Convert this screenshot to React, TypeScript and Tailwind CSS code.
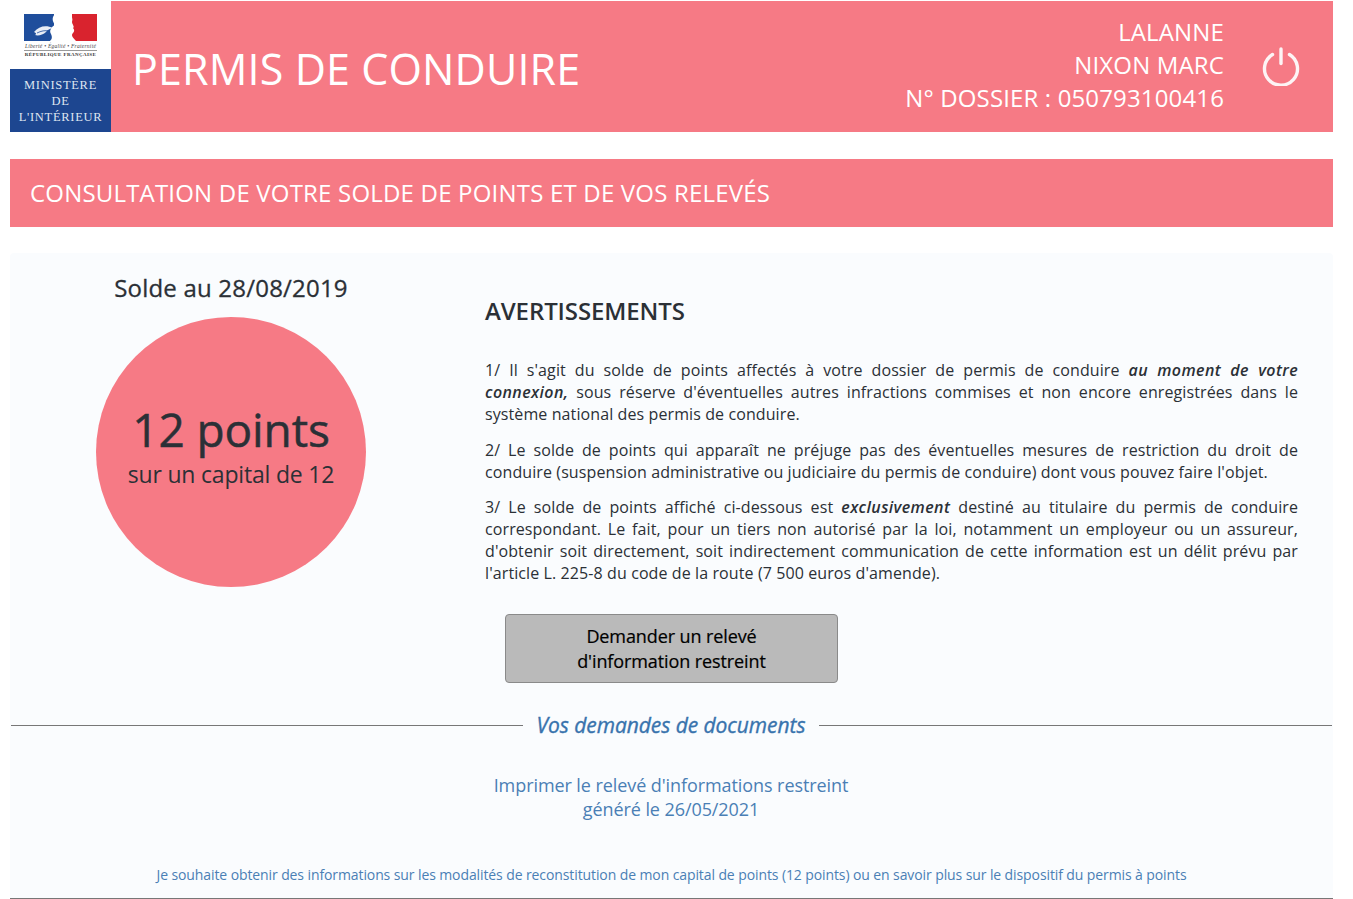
import React from 'react';

function Logo() {
  return (
    <div className="w-[101px] h-[131px] shrink-0 flex flex-col bg-white">
      <div className="h-[68px] flex flex-col items-center pt-[13px]">
        <svg width="73" height="27" viewBox="0 0 73 27" className="block">
          <rect x="0" y="0" width="30" height="27" fill="#1f4e9c" />
          <rect x="48" y="0" width="25" height="27" fill="#d9232e" />
          <path d="M31 0 C27 4 29 8 31 11 C27 13 25 17 27 20 C29 24 27 26 26 27 L52 27 C48 23 47 21 49 19 C51 17 50 15 49 14 C51 13 48 10 48 8 C49 5 48 2 46 0 Z" fill="#ffffff" />
          <path d="M10 18 C15 12 22 11 29 14 C25 15 23 16 22 18 C19 21 14 22 11 21 C13 20 12 19 10 18 Z" fill="#ffffff" opacity="0.9" />
          <path d="M13 19 C17 17 21 16 26 17" fill="none" stroke="#1f4e9c" strokeWidth="0.8" />
        </svg>
        <div className="text-[5.5px] leading-[6px] mt-[2px] whitespace-nowrap text-[#444] font-['Liberation_Serif',serif] italic tracking-[0.25px]">Liberté • Égalité • Fraternité</div>
        <div className="w-[73px] h-px bg-[#999] mt-px"></div>
        <div className="text-[5px] leading-[7px] font-bold whitespace-nowrap text-[#333] font-['Liberation_Serif',serif] tracking-[0.4px]">RÉPUBLIQUE FRANÇAISE</div>
      </div>
      <div className="flex-1 bg-[#1d4690] text-[#dfe5f0] flex flex-col items-center justify-center font-['Liberation_Serif',serif] text-[12.5px] leading-[16px] tracking-[0.7px] pt-px">
        <div>MINISTÈRE</div>
        <div>DE</div>
        <div>L'INTÉRIEUR</div>
      </div>
    </div>
  );
}

function PowerIcon() {
  return (
    <svg width="40" height="40" viewBox="0 0 40 40" fill="none" stroke="#fdf4f5" strokeWidth="3.4" strokeLinecap="round">
      <path d="M11.5 8.5 A16.5 16.5 0 1 0 28.5 8.5" />
      <path d="M20 3 V17.5" />
    </svg>
  );
}

export default function App() {
  return (
    <div className="w-[1353px] h-[899px] overflow-hidden bg-white pl-[10px] pr-[20px] pt-px font-['Open_Sans',sans-serif] text-[#2b3036]">
      <header className="h-[131px] bg-[#f67a85] flex items-center text-white">
        <Logo />
        <h1 className="ml-[21px] mt-[4px] text-[43px] leading-none flex-1 tracking-[0.13px]">PERMIS DE CONDUIRE</h1>
        <div className="text-right text-[24px] leading-[33px] tracking-[0.14px] mt-[-4px]">
          <div>LALANNE</div>
          <div>NIXON MARC</div>
          <div>N° DOSSIER : 050793100416</div>
        </div>
        <div className="ml-[37px] mr-[32px] mt-[-2px]">
          <PowerIcon />
        </div>
      </header>

      <div className="mt-[27px] h-[68px] bg-[#f67a85] flex items-center pl-[20px] text-white text-[24px] tracking-[0.19px]">
        CONSULTATION DE VOTRE SOLDE DE POINTS ET DE VOS RELEVÉS
      </div>

      <main className="mt-[26px] h-[646px] bg-[#fafcfe] rounded-t-[4px] flex flex-col">
        <div className="flex h-[433px]">
          <section className="w-[442px] shrink-0 flex flex-col items-center pt-[17px]">
            <h2 className="text-[24px] leading-[36px] tracking-[0.2px] [-webkit-text-stroke:0.3px_#2b3036]">Solde au 28/08/2019</h2>
            <div className="mt-[11px] w-[270px] h-[270px] rounded-full bg-[#f67a85] flex flex-col items-center justify-center pb-[12px]">
              <div className="text-[46px] leading-[54px] mb-[2px] tracking-[-0.1px] [-webkit-text-stroke:0.5px_#2b3036]">12 points</div>
              <div className="text-[23px] leading-[32px] tracking-[-0.2px]">sur un capital de 12</div>
            </div>
          </section>
          <section className="ml-[33px] w-[813px] pt-[40px]">
            <h2 className="text-[24px] leading-[36px] font-semibold tracking-[-0.1px]">AVERTISSEMENTS</h2>
            <div className="mt-[30px] text-[16px] leading-[22px] text-justify tracking-[0.1px]">
              <p>1/ Il s'agit du solde de points affectés à votre dossier de permis de conduire <b className="italic font-semibold tracking-[0.4px]">au moment de votre connexion,</b> sous réserve d'éventuelles autres infractions commises et non encore enregistrées dans le système national des permis de conduire.</p>
              <p className="mt-[14px]">2/ Le solde de points qui apparaît ne préjuge pas des éventuelles mesures de restriction du droit de conduire (suspension administrative ou judiciaire du permis de conduire) dont vous pouvez faire l'objet.</p>
              <p className="mt-[13px]">3/ Le solde de points affiché ci-dessous est <b className="italic font-semibold tracking-[0.4px]">exclusivement</b> destiné au titulaire du permis de conduire correspondant. Le fait, pour un tiers non autorisé par la loi, notamment un employeur ou un assureur, d'obtenir soit directement, soit indirectement communication de cette information est un délit prévu par l'article L. 225-8 du code de la route (7 500 euros d'amende).</p>
            </div>
            <button className="mt-[30px] ml-[20px] block w-[333px] h-[69px] rounded-[4px] border border-[#8a8a8a] bg-[#bababa] text-black text-[18px] leading-[25px] tracking-[-0.1px] [-webkit-text-stroke:0.2px_#000]">
              Demander un relevé<br />d'information restreint
            </button>
          </section>
        </div>

        <div className="mt-[25px] flex items-center px-px">
          <div className="flex-1 h-px bg-[#777]"></div>
          <div className="w-[296px] text-center italic text-[21px] leading-[28px] text-[#3873ad] tracking-[-0.06px] [-webkit-text-stroke:0.35px_#3873ad]">Vos demandes de documents</div>
          <div className="w-[513px] h-px bg-[#777]"></div>
        </div>

        <div className="mt-[34px] ml-[442px] w-[438px] text-center text-[18px] leading-[24px] text-[#4a7fb5] tracking-[-0.08px]">
          Imprimer le relevé d'informations restreint<br />généré le 26/05/2021
        </div>

        <div className="mt-[44px] text-center text-[14px] leading-[20px] text-[#4a7fb5] tracking-[-0.1px]">
          Je souhaite obtenir des informations sur les modalités de reconstitution de mon capital de points (12 points) ou en savoir plus sur le dispositif du permis à points
        </div>
        <div className="mt-[13px] h-px bg-[#777]"></div>
      </main>
    </div>
  );
}
